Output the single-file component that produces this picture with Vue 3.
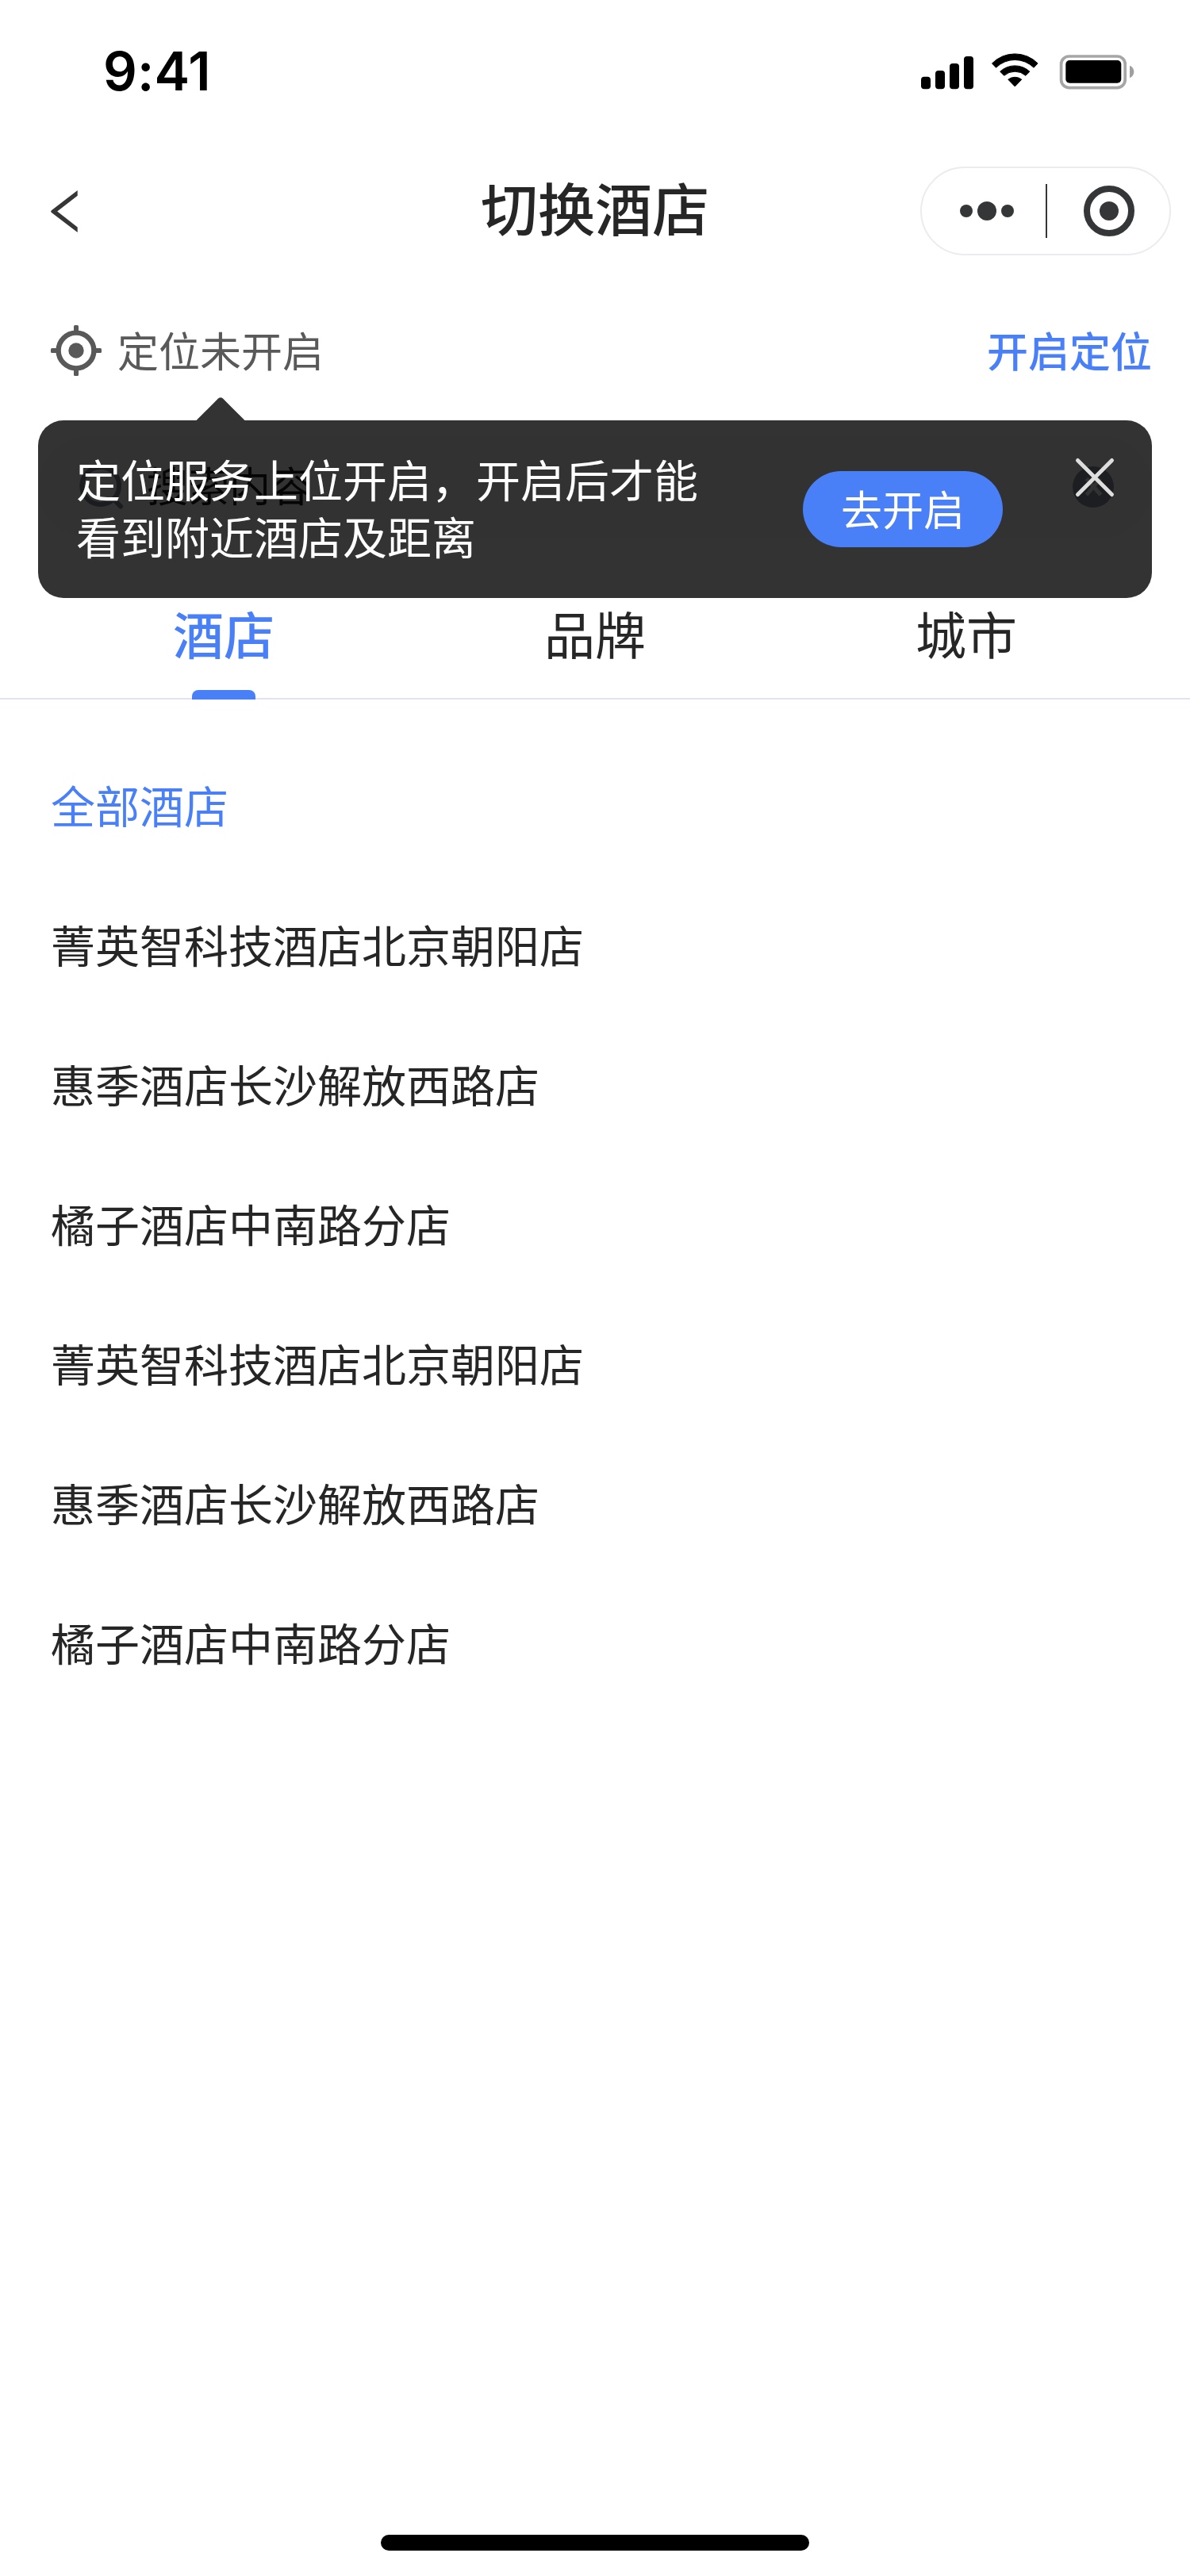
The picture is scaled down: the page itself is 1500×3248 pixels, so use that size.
<template>
  <div class="page">
    <header class="status-bar">
      <span class="time">9:41</span>
      <svg class="status-icons" width="270" height="50" viewBox="0 0 270 50">
        <rect x="1" y="31.7" width="12" height="15.6" rx="4" />
        <rect x="19" y="24" width="12" height="23.3" rx="4" />
        <rect x="37" y="15" width="12" height="32.3" rx="4" />
        <rect x="55" y="6" width="12" height="41.3" rx="4" />
        <g class="wifi">
          <path d="M90.500 14.900A40.600 40.600 0 0 1 148.100 14.900L143.100 20.200A34 34 0 0 0 95.500 20.200Z" />
          <path d="M100.700 25.200A27.300 27.300 0 0 1 137.900 25.200L132.900 30.300A20.600 20.600 0 0 0 105.700 30.300Z" />
          <path d="M110.800 35.200A14 14 0 0 1 127.800 35.200L119.300 44Z" />
        </g>
        <rect class="battery-case" x="177.600" y="6" width="80.600" height="39.600" rx="10" />
        <rect x="183.300" y="11" width="70" height="28.700" rx="5" />
        <path class="battery-cap" d="M264 17.700Q269.300 20 269.300 25.500T264 33.300Z" />
      </svg>
    </header>

    <nav class="nav-bar">
      <svg class="back" width="36" height="56" viewBox="0 0 36 56">
        <path d="M33.700 2V8.700L8.200 28.600L33.700 48.400V55L0.900 30Q-.6 28.600 .9 27.200Z" />
      </svg>
      <h1 class="title">切换酒店</h1>
      <div class="capsule">
        <svg width="312" height="108" viewBox="0 0 312 108">
          <circle cx="56" cy="54" r="8" />
          <circle cx="82" cy="54" r="12" />
          <circle cx="108" cy="54" r="8" />
          <rect x="156" y="20" width="2" height="68" />
          <circle class="capsule-ring" cx="236" cy="54" r="28" />
          <circle cx="236" cy="54" r="12" />
        </svg>
      </div>
    </nav>

    <div class="location">
      <svg class="location-icon" width="64" height="64" viewBox="0 0 64 64">
        <circle class="location-ring" cx="32" cy="32" r="22.400" />
        <circle cx="32" cy="32" r="9.700" />
        <rect x="29" y="0" width="6" height="9" rx="1.500" />
        <rect x="29" y="55" width="6" height="9" rx="1.500" />
        <rect x="0" y="29" width="9" height="6" rx="1.500" />
        <rect x="55" y="29" width="9" height="6" rx="1.500" />
      </svg>
      <span class="location-text">定位未开启</span>
      <a class="location-open">开启定位</a>
    </div>

    <div class="search-wrap">
      <div class="search">
        <svg class="search-icon" width="60" height="60" viewBox="0 0 60 60">
          <circle cx="28.700" cy="28.500" r="23.400" />
          <path d="M46 46L54 54.500" />
        </svg>
        <span class="search-text">搜索内容</span>
        <svg class="search-clear" width="52" height="52" viewBox="0 0 52 52">
          <circle cx="26" cy="26" r="26" />
          <path d="M17.500 15.500L35.500 36M35 15.500L17.500 36" />
        </svg>
      </div>

      <!-- 定位提示气泡 -->
      <div v-if="showTip" class="tip">
        <svg class="tip-arrow" width="62" height="29" viewBox="0 0 62 29">
          <path d="M.5 29L28 1.600Q31 -1.200 34 1.600L61.500 29Z" />
        </svg>
        <p class="tip-text">定位服务上位开启，开启后才能<br />看到附近酒店及距离</p>
        <button class="tip-button">去开启</button>
        <svg class="tip-close" width="52" height="52" viewBox="0 0 52 52" @click="showTip = false">
          <path d="M4.500 4.500L47.500 47.500M47.500 4.500L4.500 47.500" />
        </svg>
      </div>
    </div>

    <div class="tabs">
      <div
        v-for="(tab, index) in tabs"
        :key="tab"
        :class="['tab', { active: index === activeTab }]"
        @click="activeTab = index"
      >
        {{ tab }}
      </div>
    </div>

    <ul class="hotels">
      <li
        v-for="(hotel, index) in hotels"
        :key="index"
        :class="['hotel', { active: index === activeHotel }]"
        @click="activeHotel = index"
      >
        {{ hotel }}
      </li>
    </ul>

    <div class="home-indicator"></div>
  </div>
</template>

<script setup>
import { ref } from 'vue'

const tabs = ['酒店', '品牌', '城市']
const hotels = [
  '全部酒店',
  '菁英智科技酒店北京朝阳店',
  '惠季酒店长沙解放西路店',
  '橘子酒店中南路分店',
  '菁英智科技酒店北京朝阳店',
  '惠季酒店长沙解放西路店',
  '橘子酒店中南路分店'
]

const activeTab = ref(0)
const activeHotel = ref(0)
const showTip = ref(true)
</script>

<style>
body {
  margin: 0;
  background: #fff;
}
</style>

<style scoped>
.page {
  display: flex;
  flex-direction: column;
  box-sizing: border-box;
  width: 1500px;
  height: 3248px;
  padding-bottom: 32px;
  overflow: hidden;
  background: #fff;
  color: #262626;
  font-family: 'Noto Sans CJK SC', sans-serif;
}

svg {
  display: block;
  flex: none;
}

.status-bar {
  display: flex;
  align-items: flex-start;
  justify-content: space-between;
  box-sizing: border-box;
  height: 176px;
  padding: 65px 70px 0 130px;
}

.time {
  color: #000;
  font-family: Inter, sans-serif;
  font-size: 67px;
  font-weight: 600;
  line-height: 49px;
  letter-spacing: 0.2px;
}

.status-icons {
  fill: #000;
}

.wifi {
  stroke: #000;
  stroke-width: 1;
  stroke-linejoin: round;
}

.battery-case {
  fill: none;
  stroke: #a6a6a6;
  stroke-width: 3.7;
}

.battery-cap {
  fill: #a0a0a0;
}

.nav-bar {
  display: grid;
  grid-template-columns: 1fr auto 1fr;
  align-items: center;
  height: 180px;
  padding: 0 24px 0 64px;
}

.back {
  fill: #353638;
}

.title {
  margin: 0 0 12px -40px;
  font-size: 72px;
  font-weight: 500;
  line-height: 96px;
}

.capsule {
  justify-self: end;
  border: 2px solid #ebebf0;
  border-radius: 56px;
  fill: #353638;
}

.capsule-ring {
  fill: none;
  stroke: #353638;
  stroke-width: 8;
}

.location {
  display: flex;
  align-items: center;
  height: 172px;
  padding: 0 48px 0 64px;
  color: #595959;
  font-size: 52px;
}

.location-icon {
  margin-right: 20px;
  fill: #595959;
}

.location-ring {
  fill: none;
  stroke: #595959;
  stroke-width: 6.4;
}

.location-text,
.location-open {
  padding-bottom: 3px;
}

.location-open {
  margin-left: auto;
  color: #4a80f7;
  font-weight: 500;
}

.search-wrap {
  position: relative;
  margin: 22px 48px 0;
}

.search {
  display: flex;
  align-items: center;
  box-sizing: border-box;
  height: 128px;
  padding: 0 48px 0 50px;
  border-radius: 64px;
  background: #f7f8fa;
  font-size: 52px;
}

.search-icon {
  margin-right: 27px;
  fill: none;
  stroke: #858b9c;
  stroke-width: 6;
  stroke-linecap: round;
}

.search-text {
  padding-bottom: 8px;
  color: #1c1c1c;
}

.search-clear {
  margin-left: auto;
  fill: #9095a5;
}

.search-clear path {
  stroke: #f7f8fa;
  stroke-width: 5;
}

/* 气泡覆盖在搜索框之上 */
.tip {
  position: absolute;
  top: -20px;
  left: 0;
  display: flex;
  align-items: center;
  box-sizing: border-box;
  width: 1404px;
  height: 224px;
  padding: 0 46px 0 48px;
  border-radius: 32px;
  background: rgba(0, 0, 0, 0.8);
}

.tip-arrow {
  position: absolute;
  top: -29px;
  left: 199px;
  fill: #333;
}

.tip-text {
  margin: 0;
  padding-bottom: 7px;
  color: #fff;
  font-size: 56px;
  line-height: 72px;
  white-space: nowrap;
}

.tip-button {
  width: 252px;
  height: 96px;
  margin-left: auto;
  padding: 0 0 2px;
  border: 0;
  border-radius: 48px;
  background: #4a80f7;
  color: #fff;
  font-family: inherit;
  font-size: 52px;
  line-height: 94px;
}

.tip-close {
  align-self: flex-start;
  margin: 46px 0 0 90px;
  fill: none;
  stroke: #dedede;
  stroke-width: 5;
  stroke-linecap: round;
}

.tabs {
  display: flex;
  box-sizing: border-box;
  height: 204px;
  padding: 0 48px;
  border-bottom: 2px solid #dfe4ef;
}

.tab {
  display: flex;
  flex: 1;
  flex-direction: column;
  align-items: center;
  height: 204px;
  padding-top: 71px;
  box-sizing: border-box;
  font-size: 64px;
  line-height: 96px;
}

.tab.active {
  color: #4a80f7;
  font-weight: 500;
}

.tab.active::after {
  content: '';
  width: 80px;
  height: 12px;
  margin-top: auto;
  border-radius: 8px 8px 0 0;
  background: #4a80f7;
}

.hotels {
  margin: 44px 0 0;
  padding: 0 64px;
  list-style: none;
}

.hotel {
  font-size: 56px;
  line-height: 176px;
}

.hotel.active {
  color: #4a80f7;
}

.home-indicator {
  width: 540px;
  height: 20px;
  margin: auto auto 0;
  border-radius: 10px;
  background: #000;
}
</style>
